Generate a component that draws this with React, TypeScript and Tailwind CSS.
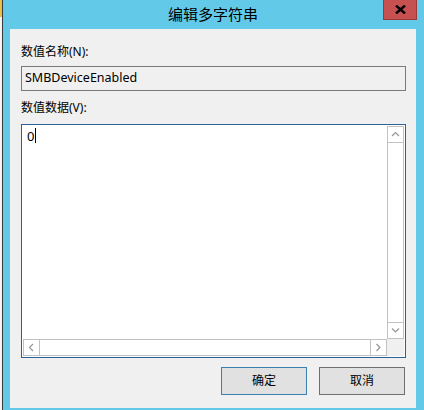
import React from "react";

const font = { fontFamily: '"Noto Sans", "Noto Sans CJK SC", sans-serif' };

function Chevron({ dir }: { dir: "up" | "down" | "left" | "right" }) {
  const pts = {
    up: "1,5 4.5,1.5 8,5",
    down: "1,1.5 4.5,5 8,1.5",
    left: "5,1 1.5,4.5 5,8",
    right: "1.5,1 5,4.5 1.5,8",
  }[dir];
  const vertical = dir === "up" || dir === "down";
  return (
    <svg width={vertical ? 9 : 7} height={vertical ? 7 : 9} viewBox={vertical ? "0 0 9 7" : "0 0 7 9"}>
      <polyline points={pts} fill="none" stroke="#969696" strokeWidth="1.2" />
    </svg>
  );
}

export default function App() {
  return (
    <div className="flex h-[410px] w-[424px] overflow-hidden bg-white" style={font}>
      {/* window behind */}
      <div className="flex w-[2px] flex-col bg-[#f4f4f4]">
        <div className="h-[17px] bg-[#e7c24a]" />
      </div>
      <div className="w-[1px] bg-[#3a3a3a]" />

      {/* dialog frame */}
      <div className="flex flex-1 flex-col bg-[#63c9e8] pb-[2px] pl-[7px] pr-[8px]">
        <div className="relative flex h-[29px] items-center justify-center pb-[1px]">
          <span className="text-[15px] leading-none text-black">编辑多字符串</span>
          <div className="absolute right-[-1px] top-0 flex h-[20px] w-[34px] items-center justify-center border border-t-0 border-[#9c3a3a] bg-[#c75050]">
            <svg width="11" height="9" viewBox="0 0 11 9">
              <path d="M1 0.5 L10 8.5 M10 0.5 L1 8.5" stroke="#000" strokeWidth="2.4" />
            </svg>
          </div>
        </div>

        <div className="flex flex-1 flex-col bg-[#f0f0f0] pl-[11px] pr-[10px] pt-[15px] text-[12px] leading-[16px] text-black">
          <label className="h-[16px]">数值名称(N):</label>
          <div className="mt-[6px] flex h-[25px] items-center border border-[#7a7a7a] bg-[#f0f0f0] pl-[3px] pb-[1px] text-[12.5px]">
            SMBDeviceEnabled
          </div>

          <label className="mt-[9px] h-[16px]">数值数据(V):</label>
          <div className="mt-[8px] grid h-[234px] grid-cols-[1fr_17px] grid-rows-[1fr_17px] border border-[#2b6196] bg-white p-[1px]">
            <div className="flex items-start pl-[4px] pt-[2px] text-[13px]">
              <span>0</span>
              <span className="ml-[1px] inline-block h-[15px] w-[1px] bg-black" />
            </div>
            <div className="flex flex-col border border-[#c2c2c2] bg-white">
              <div className="flex h-[16px] items-center justify-center border-b border-[#c2c2c2]">
                <Chevron dir="up" />
              </div>
              <div className="flex-1" />
              <div className="flex h-[16px] items-center justify-center border-t border-[#c2c2c2]">
                <Chevron dir="down" />
              </div>
            </div>
            <div className="flex border border-[#c2c2c2] bg-white">
              <div className="flex w-[16px] items-center justify-center border-r border-[#c2c2c2]">
                <Chevron dir="left" />
              </div>
              <div className="flex-1" />
              <div className="flex w-[16px] items-center justify-center border-l border-[#c2c2c2]">
                <Chevron dir="right" />
              </div>
            </div>
            <div className="bg-[#f0f0f0]" />
          </div>

          <div className="mt-[9px] flex justify-end gap-[12px] pr-[1px]">
            <button className="flex h-[28px] w-[86px] items-center justify-center border border-[#3c7fb1] bg-[#e1e1e1]">
              确定
            </button>
            <button className="flex h-[28px] w-[86px] items-center justify-center border border-[#707070] bg-[#e1e1e1]">
              取消
            </button>
          </div>
        </div>
      </div>
    </div>
  );
}
